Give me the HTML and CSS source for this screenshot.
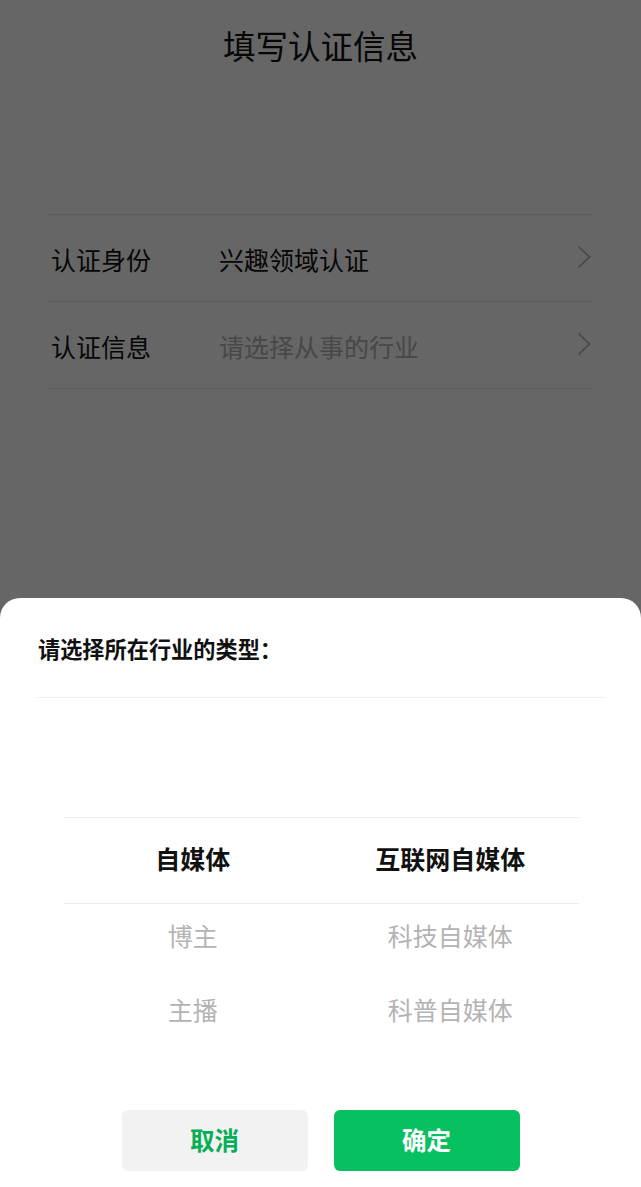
FILE: index.html
```html
<!DOCTYPE html>
<html lang="zh-CN">
<head>
<meta charset="utf-8">
<title>填写认证信息</title>
<link rel="stylesheet" href="styles.css">
</head>
<body>
<div class="page">
  <header class="header"><h1 class="title">填写认证信息</h1></header>
  <div class="list">
    <div class="row">
      <span class="label">认证身份</span>
      <span class="value">兴趣领域认证</span>
      <svg class="chev" width="14" height="24" viewBox="0 0 14 24"><polyline points="1.5,1.5 12.5,12 1.5,22.5" fill="none" stroke="#b2b2b2" stroke-width="1.6"/></svg>
    </div>
    <div class="row">
      <span class="label">认证信息</span>
      <span class="value placeholder">请选择从事的行业</span>
      <svg class="chev" width="14" height="24" viewBox="0 0 14 24"><polyline points="1.5,1.5 12.5,12 1.5,22.5" fill="none" stroke="#b2b2b2" stroke-width="1.6"/></svg>
    </div>
  </div>
</div>
<div class="mask"></div>
<div class="sheet">
  <div class="sheet-title">请选择所在行业的类型：</div>
  <div class="sheet-divider"></div>
  <div class="picker">
    <div class="prow selected"><span>自媒体</span><span>互联网自媒体</span></div>
    <div class="prow"><span>博主</span><span>科技自媒体</span></div>
    <div class="prow"><span>主播</span><span>科普自媒体</span></div>
  </div>
  <div class="actions">
    <button class="btn cancel">取消</button>
    <button class="btn ok">确定</button>
  </div>
</div>
</body>
</html>
```
FILE: styles.css
```css
* { box-sizing: border-box; }
html, body { margin: 0; padding: 0; }
body {
  width: 641px;
  height: 1187px;
  overflow: hidden;
  position: relative;
  background: #ffffff;
  font-family: "Noto Sans CJK SC", "Noto Sans", sans-serif;
  color: #111111;
}
.page { display: flex; flex-direction: column; }
.header {
  height: 92px;
  padding-bottom: 3px;
  display: flex;
  align-items: center;
  justify-content: center;
}
.title {
  margin: 0;
  font-size: 32.5px;
  font-weight: 400;
  line-height: 40px;
  color: #111;
}
.list {
  margin: 122px 49px 0 48px;
  border-top: 1px solid #e5e5e5;
}
.row {
  height: 87px;
  border-bottom: 1px solid #e5e5e5;
  display: flex;
  align-items: center;
  padding: 2px 1px 0 3px;
}
.label {
  width: 168px;
  font-size: 25px;
  color: #111;
}
.value {
  flex: 1;
  font-size: 25px;
  color: #111;
}
.value.placeholder { color: #b3b3b3; }
.chev { margin-top: -4px; }
.mask {
  position: absolute;
  inset: 0;
  background: rgba(0, 0, 0, 0.6);
}
.sheet {
  position: absolute;
  left: 0;
  right: 0;
  bottom: 0;
  background: #fff;
  border-radius: 20px 20px 0 0;
  padding: 35px 0 16px;
  display: flex;
  flex-direction: column;
}
.sheet-title {
  padding-left: 38px;
  font-size: 22.2px;
  line-height: 30px;
  font-weight: 700;
  color: #111;
}
.sheet-divider {
  margin: 34px 36px 0;
  height: 1px;
  background: #f0f0f0;
}
.picker {
  margin: 119px 62px 0 64px;
  display: flex;
  flex-direction: column;
}
.prow {
  display: grid;
  grid-template-columns: 1fr 1fr;
  height: 74px;
  line-height: 62px;
  padding-bottom: 12px;
  font-size: 25px;
  color: #b3b3b3;
  text-align: center;
}
.prow.selected {
  height: 87px;
  line-height: 81px;
  padding-bottom: 4px;
  border-top: 1px solid #ededed;
  border-bottom: 1px solid #ededed;
  color: #111;
  font-weight: 700;
}
.actions {
  margin-top: 58px;
  display: flex;
  justify-content: center;
  gap: 26px;
}
.btn {
  width: 186px;
  height: 61px;
  border: 0;
  border-radius: 6px;
  font-family: inherit;
  font-size: 24.5px;
  font-weight: 700;
  padding: 0 0 2px;
}
.cancel { background: #f2f2f2; color: #06ae56; }
.ok { background: #07c160; color: #fff; }
```
